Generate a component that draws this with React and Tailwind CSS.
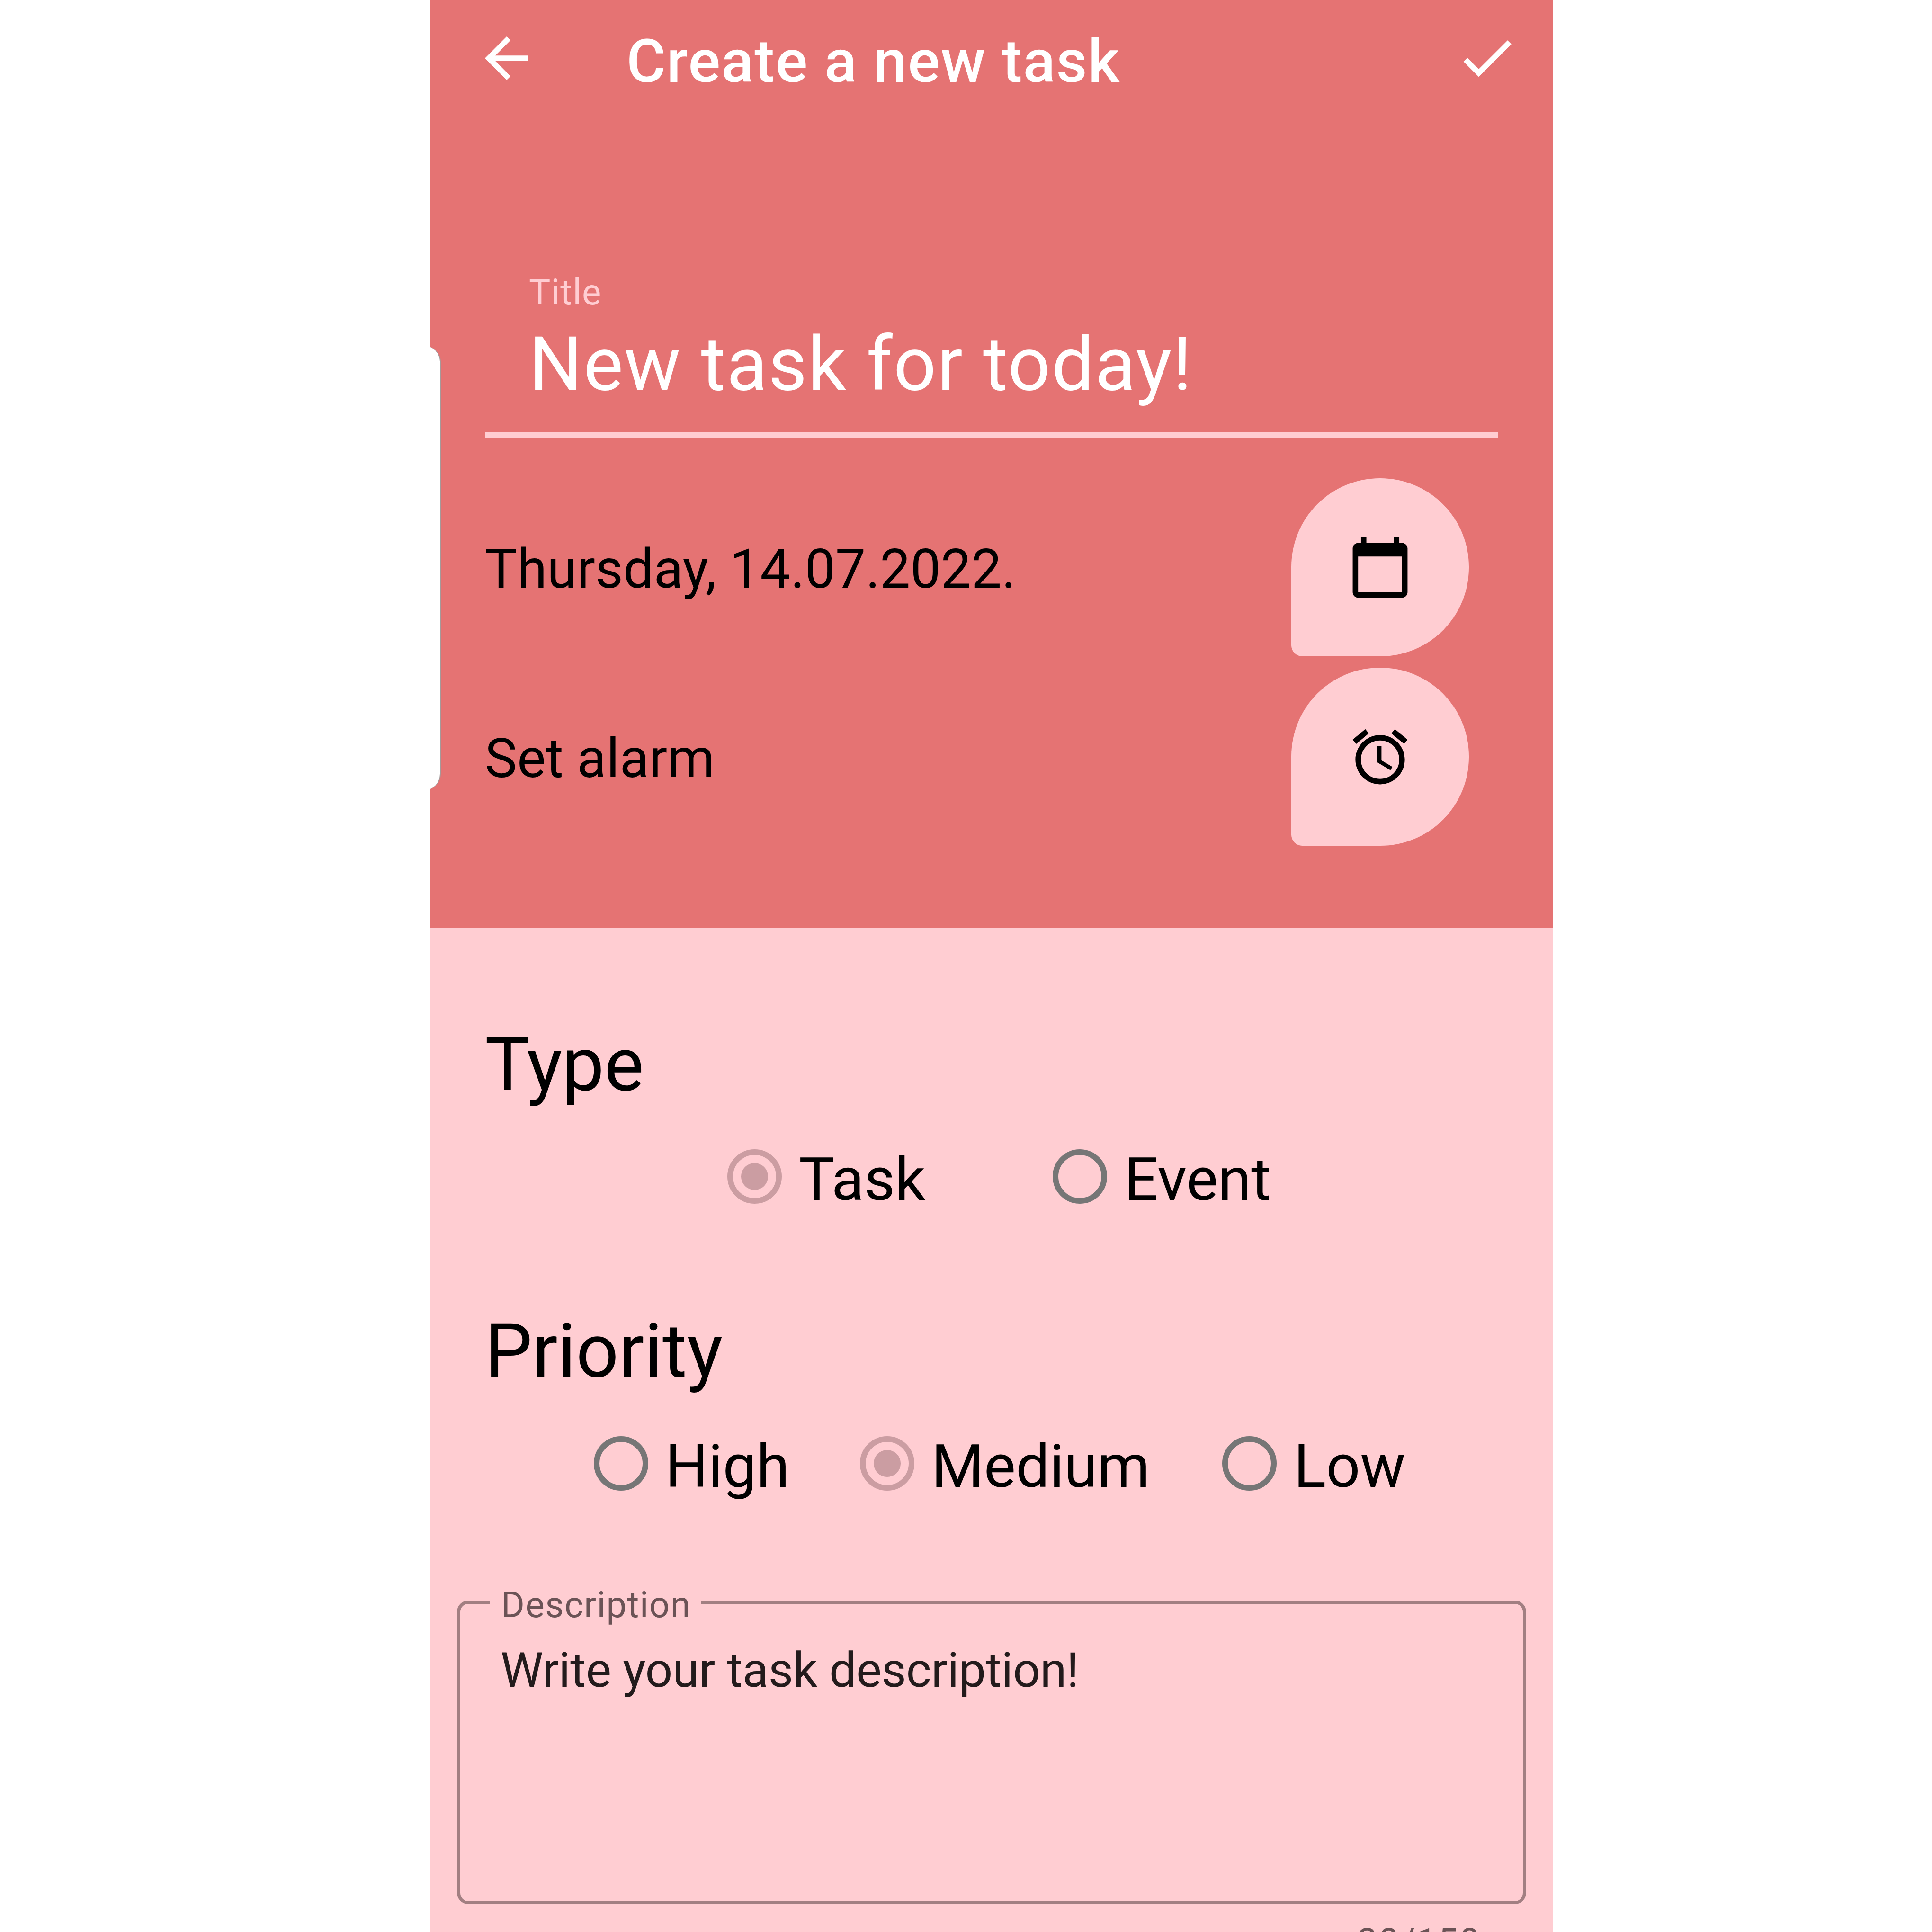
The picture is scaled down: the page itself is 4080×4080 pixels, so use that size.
function ArrowBackIcon() {
  return (
    <svg viewBox="0 0 24 24" className="size-[138px] shrink-0 fill-white">
      <path d="M20 11H7.83l5.59-5.59L12 4l-8 8 8 8 1.41-1.41L7.83 13H20v-2z" />
    </svg>
  );
}

function CheckIcon() {
  return (
    <svg viewBox="0 0 24 24" className="mb-[2px] size-[138px] shrink-0 fill-white">
      <path d="M9 16.17L4.83 12l-1.42 1.41L9 19 21 7l-1.41-1.41z" />
    </svg>
  );
}

function CalendarIcon() {
  return (
    <svg viewBox="0 0 24 24" className="size-[139px] fill-black">
      <path d="M20 3h-1V1h-2v2H7V1H5v2H4c-1.1 0-2 .9-2 2v16c0 1.1.9 2 2 2h16c1.1 0 2-.9 2-2V5c0-1.1-.9-2-2-2zm0 18H4V8h16v13z" />
    </svg>
  );
}

function AlarmIcon() {
  return (
    <svg viewBox="0 0 24 24" className="size-[139px] fill-black">
      <path d="M22 5.72l-4.6-3.86-1.29 1.53 4.6 3.86L22 5.72zM7.88 3.39L6.6 1.86 2 5.71l1.29 1.53 4.59-3.85zM12.5 8H11v6l4.75 2.85.75-1.23-4-2.37V8zM12 4c-4.97 0-9 4.03-9 9s4.02 9 9 9c4.97 0 9-4.03 9-9s-4.03-9-9-9zm0 16c-3.87 0-7-3.13-7-7s3.13-7 7-7 7 3.13 7 7-3.13 7-7 7z" />
    </svg>
  );
}

function PickerRow({ label, icon }) {
  return (
    <div className="flex items-center justify-between pr-[62px]">
      <span className="pt-[7px] text-[114.2px] leading-[134px] tracking-[0.08px] text-black">{label}</span>
      <button className="flex h-[376px] w-[375px] items-center justify-center rounded-bl-[23px] rounded-br-[187px] rounded-t-[187px] bg-[#ffcdd2]">
        {icon}
      </button>
    </div>
  );
}

function Radio({ label, checked = false, className = "" }) {
  return (
    <label className={`flex shrink-0 items-center gap-[36px] ${className}`}>
      <span
        className={`mb-[13px] flex size-[115px] shrink-0 items-center justify-center rounded-full border-[12px] ${
          checked ? "border-[#cb9da2]" : "border-[#767676]"
        }`}
      >
        {checked && <span className="size-[57px] shrink-0 rounded-full bg-[#cb9da2]" />}
      </span>
      <span className="text-[126.8px] leading-[149px] text-black">{label}</span>
    </label>
  );
}

export default function App() {
  return (
    <div className="flex h-[4080px] w-[4080px] overflow-hidden bg-white pl-[908px] font-['Roboto',sans-serif]">
      <main className="relative h-[4080px] w-[2372px] overflow-hidden bg-[#ffcdd2]">
        <header className="h-[1959px] bg-[#e57373]">
          <div className="flex h-[246px] items-center pl-[93px] pr-[71px]">
            <ArrowBackIcon />
            <h1 className="ml-[184px] mt-[13px] flex-1 text-[126.8px] font-medium leading-[149px] tracking-[1.91px] text-white">
              Create a new task
            </h1>
            <CheckIcon />
          </div>

          <div className="mx-[116px] mt-[326px]">
            <div className="border-b-[11px] border-[#ffcdd2] pb-[51px] pl-[93px]">
              <div className="text-[76.1px] leading-[90px] tracking-[1.2px] text-[#ffcdd2]">Title</div>
              <div className="mt-[14px] text-[158.6px] leading-[186px] tracking-[1.92px] text-white">
                New task for today!
              </div>
            </div>
            <div className="mt-[86px] flex flex-col gap-6">
              <PickerRow label="Thursday, 14.07.2022." icon={<CalendarIcon />} />
              <PickerRow label="Set alarm" icon={<AlarmIcon />} />
            </div>
          </div>
        </header>

        <section className="pt-[196px]">
          <h2 className="pl-[116px] text-[158.6px] leading-[186px] tracking-[-0.5px] text-black">Type</h2>
          <div className="mt-[75px] flex pl-[628px]">
            <Radio label="Task" checked className="w-[687px]" />
            <Radio label="Event" />
          </div>
        </section>

        <section className="pt-[195px]">
          <h2 className="pl-[116px] text-[158.6px] leading-[186px] text-black">Priority</h2>
          <div className="mt-[76px] flex pl-[346px]">
            <Radio label="High" className="w-[562px]" />
            <Radio label="Medium" checked className="w-[765px]" />
            <Radio label="Low" />
          </div>
        </section>

        <fieldset className="ml-[57px] mt-[162px] h-[688px] w-[2258px] rounded-[24px] border-x-[7px] border-b-[6px] border-t-[7px] border-[#a27f82] pl-[63px]">
          <legend className="w-[446px] pl-[23px] pt-[11px] text-[76.1px] leading-[90px] tracking-[1.45px] text-[#6b5356]">
            Description
          </legend>
          <p className="pl-[22px] pt-[34px] text-[101.5px] leading-[119px] tracking-[-0.28px] text-[#231b1c]">
            Write your task description!
          </p>
        </fieldset>
        <div className="mt-[34px] pl-[1958px] text-[76.1px] leading-[90px] tracking-[2.7px] text-[#6b5356]">28/150</div>

        <div className="absolute left-[-38px] top-[730px] h-[939px] w-[61px] rounded-r-[35px] border-r-2 border-[#a59a9a] bg-white" />
      </main>
    </div>
  );
}
